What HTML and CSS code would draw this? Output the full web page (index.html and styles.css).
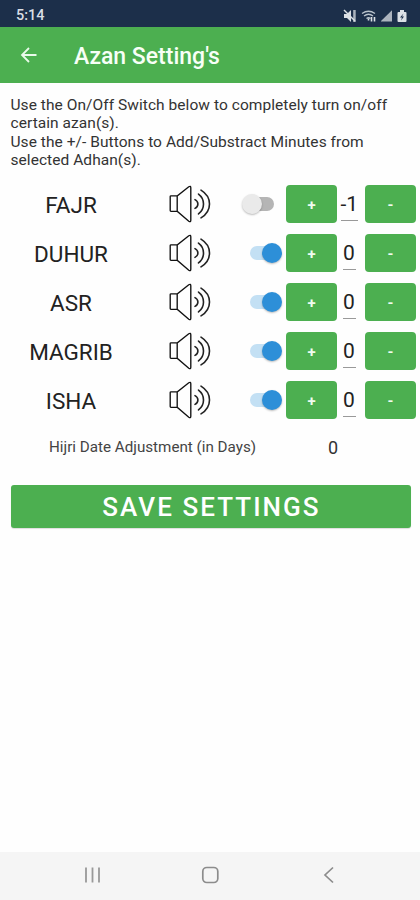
FILE: index.html
```
<!DOCTYPE html>
<html lang="en">
<head>
<meta charset="utf-8">
<title>Azan Setting's</title>
<link rel="stylesheet" href="styles.css">
</head>
<body>
<svg class="defs" width="0" height="0" aria-hidden="true">
  <symbol id="speaker" viewBox="0 0 44 38">
    <path d="M2.200 11.600q0-.8.8-.8h6.400L20.800 1.800q2-1.300 2 1v32.400q0 2.300-2 1L9.400 26.400H3q-.8 0-.8-.8z M9.200 10.800v15.600" fill="none" stroke="#111" stroke-width="1.35"/>
    <path d="M27 14.600q2.900 1.500 2.900 4.400T27 23.400M30.500 9.100q5 3.700 5 9.900t-5 9.900M33 5.100q8.500 5.200 8.500 13.900t-8.500 13.900" fill="none" stroke="#222" stroke-width="1.6" stroke-linecap="round"/>
  </symbol>
</svg>
<div class="screen">
  <div class="status">
    <span class="clock">5:14</span>
    <svg class="status-icons" width="66" height="14" viewBox="0 0 66 14">
      <g fill="#dce1e6">
        <path d="M1 5h3l4-4v12l-4-4H1z"/>
        <path d="M10.200 1h2.500v12h-2.500z" opacity=".75"/>
        <path d="M1 1l11 11" stroke="#dce1e6" stroke-width="1.4"/>
        <path d="M38 12.500V12L49 1.200v11.300z" opacity=".75"/>
        <path d="M54.500 4q0-1 1-1h1.500V1h4v2h1.500q1 0 1 1v8q0 1-1 1h-7q-1 0-1-1z"/>
      </g>
      <path d="M19 4.500q6.500-4.500 13 0M21 7q4.500-3.500 9 0M23.500 9.500q2-1.500 4 0" fill="none" stroke="#b9c3cc" stroke-width="1.3"/>
      <path d="M25.500 11.500v-2M28.500 8v4.500M31.500 8v4.500" stroke="#dce1e6" stroke-width="1.6"/>
      <path d="M60.500 4.500l-3.500 4h2l-1 3 3-4h-2z" fill="#1c2f4a"/>
    </svg>
  </div>
  <header class="bar">
    <svg class="back" width="18" height="18" viewBox="0 0 18 18"><path d="M16.500 9H2M9 2L2 9l7 7" fill="none" stroke="#e9faea" stroke-width="1.8"/></svg>
    <h1>Azan Setting's</h1>
  </header>
  <main>
    <p class="intro">Use the On/Off Switch below to completely turn on/off<br>certain azan(s).<br>Use the +/- Buttons to Add/Substract Minutes from<br>selected Adhan(s).</p>
    <div class="rows">
      <div class="row"><span class="name">FAJR</span><svg class="speaker" width="44" height="38"><use href="#speaker"/></svg><span class="switch off"></span><button>+</button><span class="num wide">-1</span><button>-</button></div>
      <div class="row"><span class="name">DUHUR</span><svg class="speaker" width="44" height="38"><use href="#speaker"/></svg><span class="switch"></span><button>+</button><span class="num">0</span><button>-</button></div>
      <div class="row"><span class="name">ASR</span><svg class="speaker" width="44" height="38"><use href="#speaker"/></svg><span class="switch"></span><button>+</button><span class="num">0</span><button>-</button></div>
      <div class="row"><span class="name">MAGRIB</span><svg class="speaker" width="44" height="38"><use href="#speaker"/></svg><span class="switch"></span><button>+</button><span class="num">0</span><button>-</button></div>
      <div class="row"><span class="name">ISHA</span><svg class="speaker" width="44" height="38"><use href="#speaker"/></svg><span class="switch"></span><button>+</button><span class="num">0</span><button>-</button></div>
    </div>
    <div class="hijri"><span class="hijri-label">Hijri Date Adjustment (in Days)</span><span class="hijri-value">0</span></div>
    <button class="save">SAVE SETTINGS</button>
  </main>
  <nav class="nav">
    <svg width="18" height="18" viewBox="0 0 18 18"><path d="M3 1.500v15M9.500 1.500v15M16 1.500v15" stroke="#999" stroke-width="1.8"/></svg>
    <svg width="18" height="18" viewBox="0 0 18 18"><rect x="1.800" y="1.500" width="15" height="15" rx="4" fill="none" stroke="#8c8c8c" stroke-width="1.7"/></svg>
    <svg width="18" height="18" viewBox="0 0 18 18"><path d="M14 1.500L6 9l8 7.500" fill="none" stroke="#8c8c8c" stroke-width="1.7"/></svg>
  </nav>
</div>
</body>
</html>
```

FILE: styles.css
```
* { box-sizing: border-box; }
body { margin: 0; background: #fefefe; font-family: Roboto, "Liberation Sans", sans-serif; color: #222; }
.defs { display: block; }
.screen { display: flex; flex-direction: column; width: 420px; height: 900px; overflow: hidden; }
.status { display: flex; justify-content: space-between; height: 27px; padding: 5px 11px 0 16px; background: #1c2f4a; }
.clock { color: #d9dee4; font-size: 14.5px; font-weight: 500; line-height: 22px; }
.status-icons { margin-top: 4px; }
.bar { display: flex; align-items: center; height: 56px; padding-left: 20px; background: #4caf50; }
.back { margin-right: 36px; }
h1 { margin: 4px 0 0; color: #f7fff7; font-size: 23px; font-weight: 500; line-height: 28px; white-space: nowrap; }
main { flex: 1; }
.intro { margin: 0; padding: 13px 0 0 10.5px; height: 96px; font-size: 15.5px; letter-spacing: 0.055px; line-height: 18.3px; white-space: nowrap; color: #333; }
.row { display: grid; grid-template-columns: 142px 98px 46px 51px 28px 51px; align-items: center; height: 49px; }
.name { text-align: center; font-size: 22.5px; line-height: 28px; padding-top: 2px; }
.speaker { margin-left: 26px; }
.switch { display: block; position: relative; width: 24px; height: 14px; margin-left: 10px; border-radius: 7px; background: #c3e0f4; }
.switch::after { content: ""; position: absolute; top: -3px; left: 12px; width: 20px; height: 20px; border-radius: 50%; background: #2d8fd8; box-shadow: 0 1px 2px #0004; }
.switch.off { background: #b5b5b5; }
.switch.off::after { left: -8px; background: #eaeaea; }
button { border: 0; padding: 0; font-family: inherit; color: #effbef; background: #4caf50; }
.row button { height: 38px; border-radius: 4px; font-size: 15px; font-weight: 700; line-height: 40px; }
.num { justify-self: center; width: 13px; height: 31px; margin: 3px 4px 0 0; border-bottom: 1px solid #999; font-size: 21px; line-height: 29px; text-align: center; white-space: nowrap; }
.wide { width: 17px; }
.hijri { display: flex; height: 46px; align-items: center; padding-left: 49px; }
.hijri-label { width: 279px; font-size: 15.2px; color: #444; white-space: nowrap; }
.hijri-value { font-size: 18px; color: #333; }
.save { display: block; width: 400px; height: 43px; margin: 15px 0 0 10.5px; padding-left: 2px; border-radius: 3px; font-size: 26px; font-weight: 500; letter-spacing: 2.05px; line-height: 45px; color: #fff; box-shadow: 0 1px 1px #0002; }
.nav { display: grid; grid-template-columns: 18px 18px 18px; column-gap: 100px; justify-content: center; align-items: center; height: 48px; padding-bottom: 2px; background: #f5f5f5; }
```
